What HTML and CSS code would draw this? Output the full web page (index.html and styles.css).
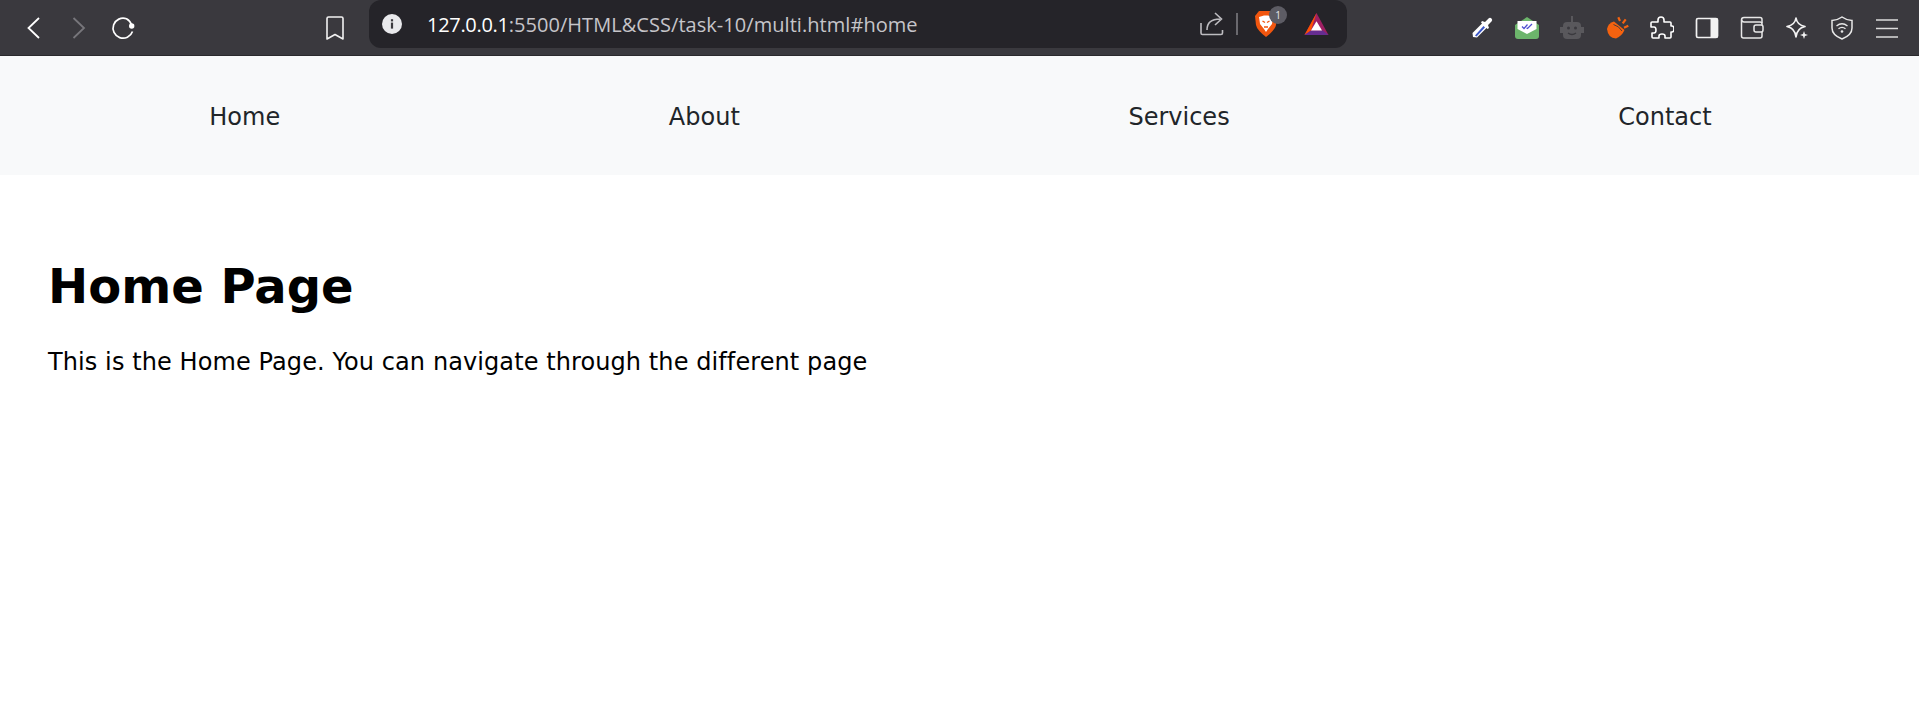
FILE: index.html
```html
<!DOCTYPE html>
<html lang="en">
<head>
<meta charset="utf-8">
<title>Home Page</title>
<link rel="stylesheet" href="styles.css">
</head>
<body>
<div class="toolbar">
  <div class="tb-btn"><svg class="ic" viewBox="0 0 24 24"><path d="M18 2 L7.500 12 L18 22" fill="none" stroke="#fff" stroke-width="1.800"/></svg></div>
  <div class="tb-btn"><svg class="ic" viewBox="0 0 24 24"><path d="M7.500 2 L18 12 L7.500 22" fill="none" stroke="#77767b" stroke-width="1.800"/></svg></div>
  <div class="tb-btn"><svg class="ic" viewBox="0 0 24 24"><path d="M20.700 9.500 Q19.500 5 15.500 2.800 A10 10 0 1 0 21.500 15.500" fill="none" stroke="#fff" stroke-width="1.700"/><circle cx="20.700" cy="10" r="2.700" fill="#fff"/></svg></div>
  <div class="tb-btn bookmark"><svg class="ic" viewBox="0 0 24 24"><path d="M4 2.500 Q4 1 5.500 1 H18.500 Q20 1 20 2.500 V23 L12 18.500 L4 23 Z" fill="none" stroke="#f2f2f2" stroke-width="1.600" stroke-linejoin="round"/></svg></div>
  <div class="address">
    <svg class="info" viewBox="0 0 20 20"><circle cx="10" cy="10" r="10" fill="#e9e9ec"/><rect x="8.900" y="8.600" width="2.200" height="6" fill="#3a393e"/><rect x="8.900" y="5.200" width="2.200" height="2.200" fill="#3a393e"/></svg>
    <div class="url"><span class="host">127.0.0.1</span>:5500/HTML&amp;CSS/task-10/multi.html#home</div>
    <svg class="share" viewBox="0 0 24 24"><path d="M1 11 V21 Q1 22.500 2.500 22.500 H21 Q22.500 22.500 22.500 21 V18 M7 18 Q7 7 20 7 M15 1 L21.500 7 L15 13" fill="none" stroke="#bdbcc0" stroke-width="1.600"/></svg>
    <div class="sep"></div>
    <div class="brave">
      <svg class="brave-ic" viewBox="0 0 24 28"><path d="M5 1 H19 L23 6 L22 15 Q21 20 12 27 Q3 20 2 15 L1 6 Z" fill="#f1560f"/><path d="M5 7 L10 5.500 H14 L19 7 L18 14 L14 19 L12 22 L10 19 L6 14 Z" fill="#fff"/><path d="M8.500 11 L11 12.500 M15.500 11 L13 12.500 M10 17 H14" stroke="#f1560f" stroke-width="1.400"/></svg>
      <span class="badge">1</span>
    </div>
    <svg class="bat" viewBox="0 0 28 26"><path d="M14 1 L27 25 H1 Z" fill="#9e1f63"/><path d="M14 1 L1 25 L8 20 Z" fill="#ff5000"/><path d="M1 25 H27 L21 20 H8 Z" fill="#662d91"/><path d="M14 10 L20 20 H8 Z" fill="#fff"/></svg>
  </div>
  <div class="extensions">
    <div class="tb-btn"><svg class="ic" viewBox="0 0 24 24"><path d="M3 21 L2.500 17 L13 6.500 L17.500 11 L7 21.500 Z" fill="#fff"/><path d="M5 19.500 L13.500 10 L15 11.500 L6.500 20.500 Z" fill="#3a57c8"/><path d="M12 5 L15 6 L18.500 2.500 Q20 1 21.500 2.500 Q23 4 21.500 5.500 L18 9 L19 12 L17.500 13 L11 6.500 Z" fill="#fff"/></svg></div>
    <div class="tb-btn"><svg class="ic" viewBox="0 0 24 24"><path d="M0 9 L12 1 L24 9 V20 Q24 23 21 23 H3 Q0 23 0 20 Z" fill="#6cb56b"/><path d="M2.500 5 H21.500 V13 L12 18 L2.500 13 Z" fill="#fff"/><path d="M7 10.500 L9 12.500 L12.500 8.500 M11.500 12 L12.500 12.500 L17 8" fill="none" stroke="#4f4fd0" stroke-width="1.300"/></svg></div>
    <div class="tb-btn"><svg class="ic" viewBox="0 0 24 24"><path d="M12 0 V6" stroke="#59585c" stroke-width="2"/><rect x="3" y="6" width="18" height="17" rx="4" fill="#59585c"/><rect x="0" y="11" width="3" height="6" fill="#59585c"/><rect x="21" y="11" width="3" height="6" fill="#59585c"/><circle cx="8.500" cy="12" r="1.500" fill="#3a393e"/><circle cx="15.500" cy="12" r="1.500" fill="#3a393e"/><path d="M8 17 Q12 20 16 17" fill="none" stroke="#3a393e" stroke-width="1.300"/></svg></div>
    <div class="tb-btn"><svg class="ic" viewBox="0 0 24 24"><path d="M2 13 Q3 7 9 5.500 L19.500 14 Q17 20 11 22.500 Q3 22 2 13 Z" fill="#f4620f"/><path d="M8.500 8.500 Q14 10 17 15" fill="none" stroke="#3a393e" stroke-width="0.900"/><path d="M13.300 1.300 L15 5 M20.700 3.300 L17.700 7.300 M23.300 9.700 L19 11.700" stroke="#f4620f" stroke-width="2.200"/></svg></div>
    <div class="tb-btn"><svg class="ic" viewBox="0 0 24 24"><path d="M8 4 Q8 1 11 1 Q14 1 14 4 V6 H20 Q21 6 21 7 V10 H22 Q24 10 24 13 Q24 16 22 16 H21 V21 Q21 22 20 22 H15 V20 Q15 18 12 18 Q9 18 9 20 V22 H3 Q2 22 2 21 V17 H4 Q6 17 6 14 Q6 11 4 11 H1 V7 Q1 6 2 6 H8 Z" fill="none" stroke="#fff" stroke-width="1.600" stroke-linejoin="round"/></svg></div>
    <div class="tb-btn"><svg class="ic" viewBox="0 0 24 24"><rect x="1.500" y="2.500" width="21" height="19" rx="1.500" fill="none" stroke="#f2f2f2" stroke-width="1.700"/><rect x="15.500" y="2.500" width="7" height="19" fill="#f2f2f2"/></svg></div>
    <div class="tb-btn"><svg class="ic" viewBox="0 0 24 24"><path d="M22 7 V3.500 Q22 1.500 20 1.500 H4 Q1.500 1.500 1.500 4 V20 Q1.500 22 3.500 22 H20 Q22 22 22 20 V16" fill="none" stroke="#e8e8e8" stroke-width="1.500"/><path d="M1.500 4 Q2 6 4 6 H20 Q22 6 22 8 V9" fill="none" stroke="#e8e8e8" stroke-width="1.500"/><rect x="14" y="9" width="9" height="7" rx="2" fill="none" stroke="#e8e8e8" stroke-width="1.500"/></svg></div>
    <div class="tb-btn"><svg class="ic" viewBox="0 0 24 24"><path d="M11 2 Q12 9 20 10.500 Q12 12 11 21 Q10 12 2 10.500 Q10 9 11 2 Z" fill="none" stroke="#f2f2f2" stroke-width="1.700" stroke-linejoin="round"/><path d="M19 15 L20 18 L23 19 L20 20 L19 23 L18 20 L15 19 L18 18 Z" fill="#f2f2f2"/></svg></div>
    <div class="tb-btn"><svg class="ic" viewBox="0 0 24 24"><path d="M12 1 Q17 4.500 22 4.500 V12 Q22 19 12 23 Q2 19 2 12 V4.500 Q7 4.500 12 1 Z" fill="none" stroke="#e8e8e8" stroke-width="1.500"/><path d="M6.500 10 Q12 5.500 17.500 10 M8.500 12.800 Q12 10 15.500 12.800" fill="none" stroke="#e8e8e8" stroke-width="1.400"/><circle cx="12" cy="15.500" r="1.300" fill="#e8e8e8"/></svg></div>
    <div class="tb-btn"><svg class="ic" viewBox="0 0 24 24"><path d="M1 4 H23 M1 12.500 H23 M1 21 H23" stroke="#dcdcdc" stroke-width="1.700"/></svg></div>
  </div>
</div>
<nav class="nav">
  <a class="nav-link" href="#home">Home</a>
  <a class="nav-link" href="#about">About</a>
  <a class="nav-link" href="#services">Services</a>
  <a class="nav-link" href="#contact">Contact</a>
</nav>
<main class="page">
  <h1 class="title">Home Page</h1>
  <p class="lead">This is the Home Page. You can navigate through the different page</p>
</main>
</body>
</html>
```
FILE: styles.css
```css
* { box-sizing: border-box; }
html, body { margin: 0; height: 100%; background: #fff; overflow: hidden; }
body { font-family: "DejaVu Sans", sans-serif; color: #000; }

.toolbar {
  display: flex;
  align-items: center;
  height: 56px;
  padding-left: 10px;
  background: #3a393e;
  border-bottom: 1px solid #2a292d;
}
.tb-btn {
  width: 45px;
  height: 48px;
  flex: none;
  display: flex;
  align-items: center;
  justify-content: center;
}
.ic { width: 24px; height: 24px; display: block; }
.bookmark { margin-left: 167px; }
.address {
  flex: none;
  display: flex;
  align-items: center;
  align-self: flex-start;
  width: 978px;
  height: 48px;
  margin-left: 12px;
  padding-left: 13px;
  background: #252429;
  border-radius: 12px;
}
.info { width: 20px; height: 20px; flex: none; }
.url {
  margin-left: 25px;
  flex: none;
  width: 773px;
  font: 20px "Open Sans", sans-serif;
  letter-spacing: 0.05px;
  color: #c6c5c9;
  white-space: nowrap;
}
.host { color: #fff; letter-spacing: -0.3px; }
.share { width: 24px; height: 24px; flex: none; }
.sep { width: 2px; height: 22px; margin-left: 12px; background: #6a696e; flex: none; }
.brave { position: relative; width: 24px; height: 28px; margin-left: 16px; flex: none; }
.brave-ic { width: 24px; height: 28px; display: block; }
.badge {
  position: absolute;
  top: -4px;
  left: 15px;
  width: 18px;
  height: 18px;
  border-radius: 50%;
  background: #5d5c64;
  color: #e8e8e8;
  font: 10px/18px "Open Sans", sans-serif;
  text-align: center;
}
.bat { width: 27px; height: 24px; margin-left: 25px; flex: none; }
.extensions { display: flex; margin-left: 112px; }

.nav {
  display: flex;
  justify-content: space-around;
  align-items: center;
  height: 119px;
  padding: 2px 13px 0 15px;
  background: #f8f9fa;
}
.nav-link { color: #212529; font-size: 24px; text-decoration: none; }

.page { padding: 82px 48px; }
.title { margin: 0; font-size: 48px; font-weight: 700; line-height: 58px; }
.lead { margin: 33px 0 0; font-size: 24px; line-height: 29px; letter-spacing: 0.09px; }
```
